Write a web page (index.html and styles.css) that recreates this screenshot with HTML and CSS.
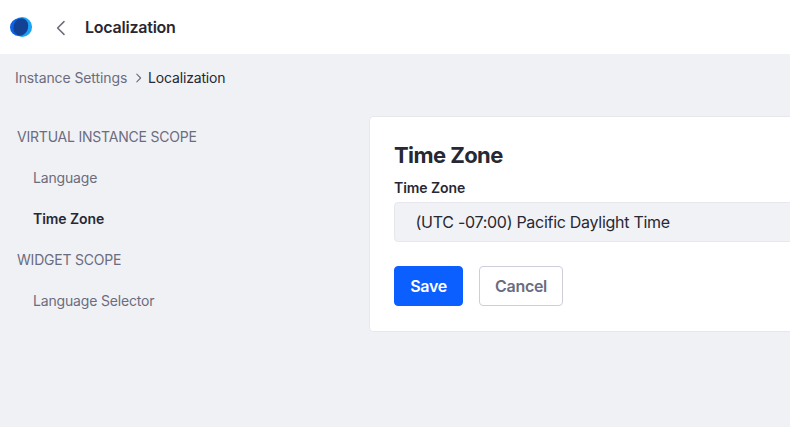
FILE: index.html
```html
<!DOCTYPE html>
<html lang="en">
<head>
<meta charset="utf-8">
<title>Localization</title>
<link rel="stylesheet" href="styles.css">
</head>
<body>
<header class="topbar">
  <svg class="logo" width="24" height="24" viewBox="0 0 24 24" aria-hidden="true">
    <circle cx="13.2" cy="12" r="9.9" fill="#1ca4f4"/>
    <ellipse cx="10" cy="12.2" rx="9" ry="8.9" fill="#0b63e5"/>
    <ellipse cx="11.8" cy="11.8" rx="7.2" ry="8.8" fill="#134194" transform="rotate(22 11.8 11.8)"/>
  </svg>
  <svg class="back" width="10" height="16" viewBox="0 0 10 16" aria-hidden="true">
    <path d="M8 1.6 1.6 8 8 14.4" fill="none" stroke="#6b6c7e" stroke-width="1.5" stroke-linecap="round" stroke-linejoin="round"/>
  </svg>
  <h1 class="topbar-title">Localization</h1>
</header>
<nav class="breadcrumb">
  <a class="crumb">Instance Settings</a>
  <svg class="separator" width="6" height="10" viewBox="0 0 6 10" aria-hidden="true">
    <path d="M.8 1.2 4.6 5 .8 8.8" fill="none" stroke="#6b6c7e" stroke-width="1.1" stroke-linecap="round" stroke-linejoin="round"/>
  </svg>
  <span class="crumb current">Localization</span>
</nav>
<main class="layout">
  <nav class="sidebar">
    <div class="scope">VIRTUAL INSTANCE SCOPE</div>
    <a class="item">Language</a>
    <a class="item active">Time Zone</a>
    <div class="scope">WIDGET SCOPE</div>
    <a class="item">Language Selector</a>
  </nav>
  <section class="sheet">
    <h2 class="sheet-title">Time Zone</h2>
    <label class="label">Time Zone</label>
    <div class="select"><span>(UTC -07:00) Pacific Daylight Time</span></div>
    <div class="actions">
      <button class="btn primary">Save</button>
      <button class="btn secondary">Cancel</button>
    </div>
  </section>
</main>
</body>
</html>
```
FILE: styles.css
```css
* { box-sizing: border-box; }
body {
  margin: 0;
  height: 427px;
  overflow: hidden;
  background: #f0f1f5;
  color: #272833;
  font: 14px/21px Inter, "Liberation Sans", sans-serif;
}
.topbar {
  display: flex;
  align-items: center;
  height: 54px;
  padding-left: 9px;
  background: #fff;
}
.logo { flex: none; }
.back { flex: none; margin: 2px 0 0 23px; }
.topbar-title {
  margin: 0 0 0 19px;
  font-size: 16px;
  font-weight: 600;
  line-height: 24px;
  letter-spacing: -0.23px;
}
.breadcrumb {
  display: flex;
  align-items: center;
  height: 48px;
  padding: 0 0 1px 15px;
}
.crumb { width: 121px; color: #6b6c7e; letter-spacing: -0.1px; white-space: nowrap; }
.separator { flex: none; margin-right: 6px; }
.crumb.current { color: #272833; letter-spacing: -0.16px; }
.layout {
  display: grid;
  grid-template-columns: 352px 460px;
  padding: 14px 0 0 17px;
}
.sidebar { color: #6b6c7e; }
.scope, .item { display: block; height: 41px; padding-top: 10px; white-space: nowrap; letter-spacing: -0.21px; }
.item { padding-left: 16px; letter-spacing: -0.17px; }
.item.active { color: #272833; font-weight: 600; letter-spacing: -0.08px; }
.sheet {
  height: 216px;
  padding: 23px 0 0 24px;
  border: 1px solid #e7e7ed;
  border-radius: 4px;
  background: #fff;
}
.sheet-title { margin: 0; font-size: 22px; font-weight: 700; line-height: 31px; letter-spacing: -0.58px; }
.label { display: block; height: 31px; padding-top: 6px; font-weight: 600; letter-spacing: -0.08px; }
.select {
  height: 40px;
  padding: 7px 0 0 20.5px;
  border: 1px solid #e7e7ed;
  border-radius: 4px;
  background: #f1f2f5;
  font-size: 16px;
  line-height: 24px;
  letter-spacing: -0.28px;
}
.actions { display: flex; gap: 16px; margin-top: 24px; }
.btn {
  height: 40px;
  padding: 0;
  border: 1px solid #0b5fff;
  border-radius: 4px;
  background: #0b5fff;
  color: #fff;
  font: 600 16px/24px Inter, "Liberation Sans", sans-serif;
  letter-spacing: -0.3px;
}
.primary { width: 69px; }
.secondary { width: 84px; border-color: #cdced9; background: #fff; color: #6b6c7e; }
```
